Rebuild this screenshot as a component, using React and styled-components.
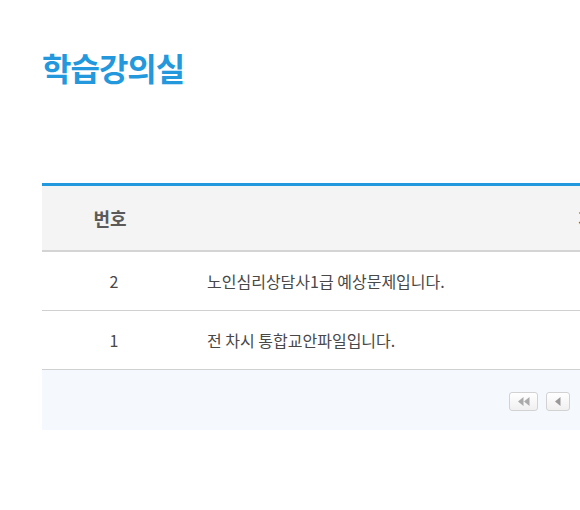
import React from "react";
import styled, { createGlobalStyle } from "styled-components";

const Global = createGlobalStyle`
  html, body { margin: 0; padding: 0; overflow: hidden; background: #fff; }
  body { font-family: "Noto Sans CJK KR", "Noto Sans", sans-serif; }
`;

const Page = styled.div`
  padding: 45px 0 0 42px;
  width: 1100px;
`;

const Title = styled.h2`
  margin: 0;
  font-size: 32px;
  line-height: 44px;
  font-weight: 700;
  color: #2398dc;
  letter-spacing: -1px;
`;

const Board = styled.div`
  margin-top: 94px;
  width: 970px;
  border-top: 3px solid #2299dc;
`;

const Table = styled.table`
  width: 100%;
  border-collapse: collapse;
  table-layout: fixed;
`;

const Th = styled.th`
  width: ${(p) => p.$w || "auto"};
  height: 64px;
  background: #f4f4f4;
  border-bottom: 2px solid #d4d4d4;
  font-size: 18px;
  font-weight: 700;
  color: #5a5a5a;
  text-align: center;
  padding: 0;
`;

const Td = styled.td`
  height: 58px;
  border-bottom: 1px solid #d0d0d0;
  font-size: 16px;
  font-weight: 400;
  color: #484848;
  padding: 0 0 0 ${(p) => (p.$left ? "29px" : "8px")};
  text-align: ${(p) => (p.$left ? "left" : "center")};
`;

const Footer = styled.div`
  height: 60px;
  background: #f5f9fd;
  display: flex;
  align-items: center;
  padding-left: 467px;
  gap: 8px;
`;

const PageBtn = styled.button`
  width: ${(p) => p.$w}px;
  height: 19px;
  border: 1px solid #d2d2d2;
  border-radius: 3px;
  background: linear-gradient(#ffffff, #f0f0f0);
  display: flex;
  align-items: center;
  justify-content: center;
  padding: 0;
  margin-top: 2px;
`;

const rows = [
  { no: 2, title: "노인심리상담사1급 예상문제입니다." },
  { no: 1, title: "전 차시 통합교안파일입니다." },
];

export default function App() {
  return (
    <>
      <Global />
      <Page>
        <Title>학습강의실</Title>
        <Board>
          <Table>
            <thead>
              <tr>
                <Th $w="136px">번호</Th>
                <Th>제목</Th>
              </tr>
            </thead>
            <tbody>
              {rows.map((r) => (
                <tr key={r.no}>
                  <Td>{r.no}</Td>
                  <Td $left>{r.title}</Td>
                </tr>
              ))}
            </tbody>
          </Table>
          <Footer>
            <PageBtn $w={29} aria-label="first">
              <svg width="12" height="9" viewBox="0 0 12 9">
                <path d="M0 4.5 L5.5 0 V9 Z M6 4.5 L11.5 0 V9 Z" fill="#aaa" />
              </svg>
            </PageBtn>
            <PageBtn $w={24} aria-label="prev">
              <svg width="6" height="9" viewBox="0 0 6 9">
                <path d="M0 4.5 L5.5 0 V9 Z" fill="#999" />
              </svg>
            </PageBtn>
          </Footer>
        </Board>
      </Page>
    </>
  );
}
